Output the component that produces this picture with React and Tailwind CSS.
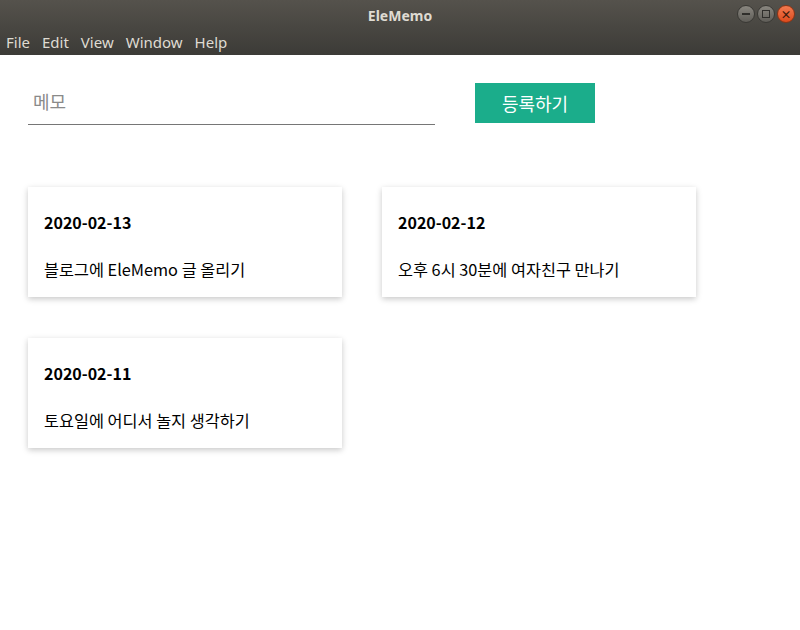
import React, { useState } from "react";

const memos = [
  { date: "2020-02-13", text: "블로그에 EleMemo 글 올리기" },
  { date: "2020-02-12", text: "오후 6시 30분에 여자친구 만나기" },
  { date: "2020-02-11", text: "토요일에 어디서 놀지 생각하기" },
];

const font = { fontFamily: '"Noto Sans CJK KR", "Noto Sans", sans-serif' };

const App = () => {
  const [memo, setMemo] = useState("");

  return (
    <div className="w-[800px] h-[630px] bg-white flex flex-col overflow-hidden" style={font}>
      {/* ── Window chrome ───────────────────────────── */}
      <div className="h-[55px] bg-gradient-to-b from-[#55524c] to-[#3c3b37] flex flex-col">
        <div className="h-[30px] relative flex items-center justify-center">
          <span className="text-[#dfdbd2] text-[14px] font-bold font-['Noto_Sans',sans-serif]">EleMemo</span>
          <div className="absolute right-[5px] top-[5px] flex gap-[2px]">
            <div className="w-[18px] h-[18px] rounded-full bg-gradient-to-b from-[#8a8780] to-[#5f5d58] border border-[#3a3935] flex items-center justify-center">
              <div className="w-[8px] h-[1.5px] bg-[#2f2e2b]" />
            </div>
            <div className="w-[18px] h-[18px] rounded-full bg-gradient-to-b from-[#8a8780] to-[#5f5d58] border border-[#3a3935] flex items-center justify-center">
              <div className="w-[8px] h-[8px] border-[1.5px] border-[#2f2e2b]" />
            </div>
            <div className="w-[18px] h-[18px] rounded-full bg-gradient-to-b from-[#f37a4f] to-[#dd4a1b] border border-[#8d3415] flex items-center justify-center text-[#3a1a0c] text-[11px] leading-none font-bold">
              ×
            </div>
          </div>
        </div>
        <div className="flex items-center gap-[12px] px-[6px] h-[25px] text-[#dfdbd2] text-[15px] font-['Noto_Sans',sans-serif]">
          <span>File</span>
          <span>Edit</span>
          <span>View</span>
          <span>Window</span>
          <span>Help</span>
        </div>
      </div>

      {/* ── Content ─────────────────────────────────── */}
      <div className="flex flex-col px-[28px] pt-[28px]">
        <div className="flex items-start gap-[40px]">
          <input
            value={memo}
            onChange={(e) => setMemo(e.target.value)}
            placeholder="메모"
            className="w-[407px] h-[42px] border-b border-[#767676] outline-none px-[5px] pb-[5px] text-[18px] placeholder:text-[#8a8a8a]"
            style={font}
          />
          <button className="w-[120px] h-[40px] bg-[#1bad8b] text-white text-[18px]">등록하기</button>
        </div>

        <div className="grid grid-cols-[314px_314px] gap-x-[40px] gap-y-[41px] mt-[62px]">
          {memos.map((m) => (
            <div key={m.date} className="h-[110px] bg-white shadow-[0_2px_6px_rgba(0,0,0,0.22)] px-[16px] pt-[24px]">
              <div className="text-[16px] font-bold text-black leading-[22px]">{m.date}</div>
              <div className="text-[16.3px] text-black leading-[22px] mt-[25px]">{m.text}</div>
            </div>
          ))}
        </div>
      </div>
    </div>
  );
};

export default App;
